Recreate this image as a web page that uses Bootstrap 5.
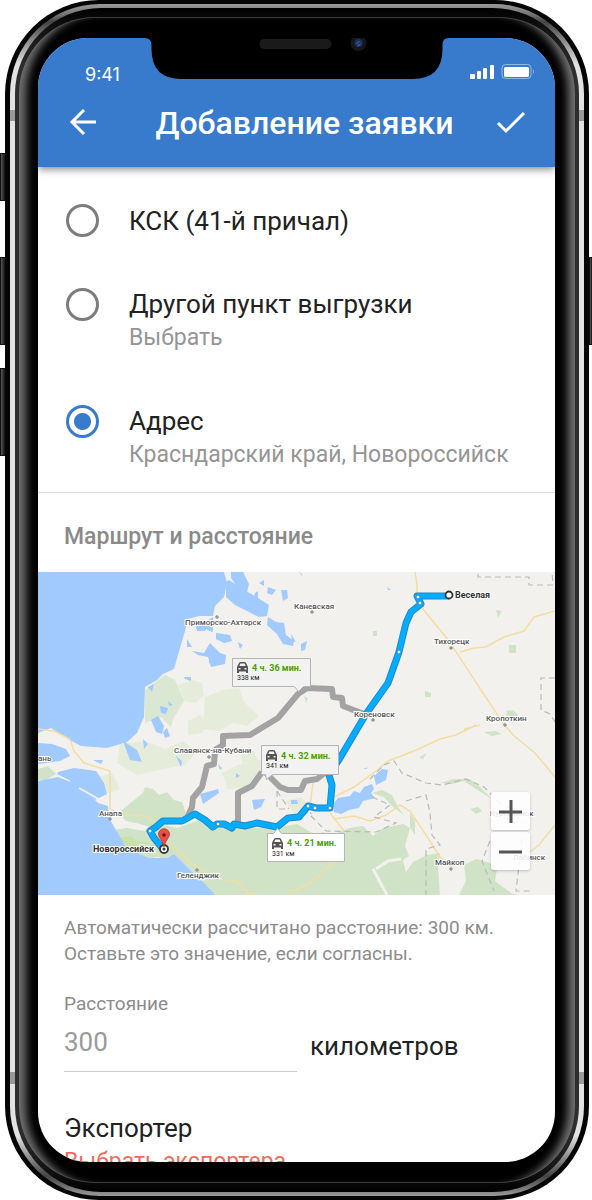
<!DOCTYPE html>
<html lang="ru">
<head>
<meta charset="utf-8">
<meta name="viewport" content="width=device-width, initial-scale=1">
<title>Добавление заявки</title>
<link href="https://cdn.jsdelivr.net/npm/bootstrap@5.3.0/dist/css/bootstrap.min.css" rel="stylesheet">
<style>
  body { font-family: Roboto, "Open Sans", sans-serif; background: #fff; color: #222; }
  .phone { display: grid; grid-template-columns: 5px minmax(0, 1fr) 3px; height: 100vh; overflow: hidden; }
  .keys { display: flex; flex-direction: column; }
  .key { background: linear-gradient(to right, #555, #111); border: 1px solid #111; border-right: 0; flex: none; }
  .keys-left { padding-top: 153px; }
  .keys-right { padding-top: 257px; }
  .key-mute { height: 48px; margin-bottom: 56px; }
  .key-long { height: 88px; margin-bottom: 23px; }

  /* nested shells of the case, from the outer edge in */
  .shell-edge { background: #050505; border-radius: 94px; padding: 4px 5px; min-height: 0; }
  .shell-ring { height: 100%; border-radius: 90px; padding: 4px 5px;
    background: linear-gradient(to bottom, #999 0, #777 10px, #444 18px, #e2e2e2 60px, #e2e2e2 106px, #999 106px, #999 117px, #e2e2e2 117px, #e2e2e2 calc(100% - 124px), #999 calc(100% - 124px), #999 calc(100% - 112px), #e2e2e2 calc(100% - 112px), #e2e2e2 calc(100% - 60px), #444 calc(100% - 20px), #999 100%); }
  .shell-lip { height: 100%; border-radius: 86px; padding: 9px 4px; background: linear-gradient(to bottom, #000 0, #111 20px, #2e2e2e 60px, #2e2e2e calc(100% - 60px), #111 calc(100% - 20px), #000); }
  .shell-bezel { height: 100%; border-radius: 76px; padding: 21px 20px 21px 19px; background: #000;
    box-shadow: inset 13px 0 9px -6px #707070, inset -13px 0 9px -6px #707070, inset 0 1px 0 #333, inset 0 -1px 0 #333; }
  .viewport { height: 100%; border-radius: 50px; overflow: hidden; background: #fff; position: relative; display: flex; flex-direction: column; }
  .notch { position: absolute; top: 0; left: 50%; transform: translateX(-50%); z-index: 3; }

  .app-head { background: #387bcd; color: #fff; box-shadow: 0 2px 8px rgba(0,0,0,.5); z-index: 2; flex: none; height: 129px; }
  .status { height: 60px; padding: 25px 20px 0 47px; }
  .clock { font: 400 18px/24px Inter, Roboto, sans-serif; }
  .head-row { padding: 0 29px 0 31px; height: 50px; }
  .head-row h1 { font-size: 32px; line-height: 36px; font-weight: 500; margin: 0; }
  .icon-btn { background: none; border: 0; padding: 0; color: #fff; line-height: 0; }

  .sheet { flex: 1 1 0; min-height: 0; overflow: hidden; }
  .pick { padding: 0 28px; gap: 30px; }
  .pick-first { padding-top: 37px; }
  .pick-next { padding-top: 51px; }
  .pick-last { padding-top: 49px; padding-bottom: 19px; border-bottom: 1px solid #dcdcdc; }
  .pick .form-check-input { width: 33px; height: 33px; margin: 0; border: 3px solid #7c7c7c; background: #fff; flex: none; float: none; }
  .pick .form-check-input:checked { border-color: #387bcd; background: radial-gradient(circle, #387bcd 0 8px, #fff 9px); }
  .fs-main { font-size: 26px; line-height: 32px; }
  .fs-sub { font-size: 23px; line-height: 36px; color: #959595; }
  .fs-note { font-size: 19px; line-height: 26px; color: #8c8c8c; }
  .section-title { font-size: 23px; line-height: 26px; font-weight: 500; color: #8a8a8a; margin: 0; padding: 31px 26px 22px; }
  .map-box { position: relative; }
  .map-box > svg { display: block; width: 100%; height: auto; }
  .zoomer { position: absolute; right: 25px; bottom: 25px; gap: 2px; }
  .zoomer button { width: 39px; height: 38px; padding: 0; border: 0; border-radius: 3px; background: rgba(255,255,255,.86); box-shadow: 0 1px 3px rgba(0,0,0,.22); display: grid; place-items: center; }
  .zoomer svg { width: 23px; height: 23px; }
  .town { font: 500 8px Roboto, sans-serif; fill: #555; stroke: #fff; stroke-width: 2; paint-order: stroke; }
  .town-end { font: 700 9px Roboto, sans-serif; fill: #333; stroke: #fff; stroke-width: 2; paint-order: stroke; }
  .eta { font: 700 9px Roboto, sans-serif; fill: #4c9f00; }
  .dist { font: 400 7px Roboto, sans-serif; fill: #222; }
  .pad { padding: 0 26px; }
  .km { width: 233px; border: 0; border-bottom: 1px solid #ccc; border-radius: 0; padding: 0 0 12px; font-size: 26px; line-height: 34px; color: #9a9a9a; background: none; }
  .unit { padding: 0 0 6px 13px; }
  .exporter { padding-top: 40px; }
  .pick-exp { display: block; color: #f5695d; font-size: 23px; line-height: 36px; text-decoration: none; }
</style>
</head>
<body>
<div class="phone">
  <div class="keys keys-left"><div class="key key-mute"></div><div class="key key-long"></div><div class="key key-long"></div></div>
  <div class="shell-edge"><div class="shell-ring"><div class="shell-lip"><div class="shell-bezel">
    <div class="viewport">
      <svg class="notch" width="305" height="41" viewBox="144 38 305 41" aria-hidden="true">
        <path d="M144 37v1q7 0 7 7v4q0 30 30 30h231q30 0 30-30v-4q0-7 6-7v-1z" fill="#000"/>
        <rect x="259" y="39" width="72" height="10" rx="5" fill="#1a1a1a"/>
        <circle cx="358" cy="43" r="8" fill="#17171a"/><circle cx="358" cy="43" r="4" fill="#1c3263"/><path d="M356 44l3-3M357 46l3-2" stroke="#4870bd" stroke-width="1"/>
      </svg>
      <header class="app-head">
        <div class="status d-flex justify-content-between align-items-start">
          <span class="clock">9:41</span>
          <svg width="65" height="16" viewBox="0 0 65 16" aria-hidden="true" fill="#fff">
            <rect x="0" y="11" width="5" height="5" rx="1"/><rect x="7" y="8" width="4" height="8" rx="1"/><rect x="13" y="5" width="4" height="11" rx="1"/><rect x="20" y="2" width="4" height="14" rx="1"/>
            <rect x="32" y="1.500" width="29" height="14" rx="3.500" fill="none" stroke="#8fb8ea"/><rect x="34" y="4" width="25" height="10" rx="1.500"/><path d="M63 6q2 3 0 5z" fill="#8fb8ea"/>
          </svg>
        </div>
        <div class="head-row d-flex align-items-center justify-content-between">
          <button class="icon-btn" type="button" aria-label="Назад"><svg width="28" height="28" viewBox="0 0 28 28" fill="none" stroke="#fff" stroke-width="3"><path d="M27 13H4M15 1 3 13l12 12"/></svg></button>
          <h1 class="ps-3">Добавление заявки</h1>
          <button class="icon-btn" type="button" aria-label="Готово"><svg width="30" height="28" viewBox="0 0 30 28" fill="none" stroke="#fff" stroke-width="3"><path d="M2 14l8 8L28 4"/></svg></button>
        </div>
      </header>
      <main class="sheet">
        <div class="pick pick-first d-flex align-items-center">
          <input class="form-check-input" type="radio" name="place" id="p1">
          <label class="fs-main" for="p1">КСК (41-й причал)</label>
        </div>
        <div class="pick pick-next d-flex align-items-start">
          <input class="form-check-input" type="radio" name="place" id="p2">
          <label for="p2"><span class="fs-main d-block">Другой пункт выгрузки</span><span class="fs-sub d-block">Выбрать</span></label>
        </div>
        <div class="pick pick-last d-flex align-items-start">
          <input class="form-check-input" type="radio" name="place" id="p3" checked>
          <label for="p3"><span class="fs-main d-block">Адрес</span><span class="fs-sub d-block">Красндарский край, Новороссийск</span></label>
        </div>
        <h2 class="section-title">Маршрут и расстояние</h2>
        <div class="map-box">
          <svg viewBox="38 571 517 323" role="img" aria-label="Карта маршрута">
            <rect x="38" y="571" width="517" height="323" fill="#f2f1ed"/>
            <!-- fields -->
            <g fill="#e6ecda">
              <path d="M178 684l14-5 10 3 2 12-8 8-12-2zM205 696l18-7 16-2 5 14 15 14-12 10-14-3-14 8-17-2 2-16zM188 720l12-6 8 8-6 10-14 2zM120 743l25-3 20 8 18-8 14 10-12 14-22 4-26 6-20-12zM222 772l16-8 26-6 4 14-20 14-20 2zM90 778l22-6 8 16-12 4zM240 748l14 2 4 10-16 2zM285 800l16-4 8 10-14 8z"/>
            </g>
            <path d="M145 689l20-15 10 5 9 21-11 18-2 8-10-10-16 6z" fill="#dae7d3"/>
            <!-- forest -->
            <g fill="#d1e3c7">
              <path d="M118 812l15-12 10-8 2-6 8 2 6 6 8-3 7 8 8 2 4 12-6 7-14 4-16 2-14-4-10-2z"/>
              <path d="M113 829l14-2 18 3 12-7 20 4 22-8 16 5 30 3 30 0 22-4 20 12 6-4 6 4 20-8 14-2 10 10 10-8 20-4 7 4-5 18 4 10-6 4 3 12 7-10 14-7 13-2-2 12 2 32h18l8-16-2-16 12-6 14 4 7 6-2 12 16 12 13 4v6H214l-22-22-16-18-18-6-12 2-24-9z"/>
              <path d="M38 768l10-3 8 8-10 6h-8zM372 792l10-3 10 5 6 12 6 8-11-8-9-10zM410 812l5 8v14l-5-8zM440 782l14-4 16 0 10 8 12 12-16-10-12-8-12 3zM484 731l12-1 6 3-10 2zM419 756l8-4-4 6zM470 808l8-2 4 4-6 3zM505 713l8-4 4 4 4 8-8-4zM373 630l4 0 0 5-4 0zM496 609l6 1-4 7zM509 644h7v8h-7zM425 690l6 2v4h-6zM304 695l4 2-2 5zM506 710l5-1v8z"/>
            </g>
            <path d="M376 868l12-8 13-2M373 868l14 26" stroke="#f2f1ed" stroke-width="3" fill="none"/>
            <path d="M119 837l12-2 6 5 12 2-8 4-14 0z" fill="#c7e2a7"/>
            <!-- water -->
            <g fill="#a1caff">
              <path d="M38 571H224l3 11-3 14-9 9-2 10-14 0-11 3-3 12-5 17-6 21-11 5-6 6-12 7-1 30-7 16-10 9-20 6-26-2-13-7-17-11-11 4-4 4z"/>
              <path d="M38 742l14 1 14 5 4 7-10 5-22 3zM58 771l16-4 22 3 8 12 3 11-12 6-8-8-10-4-8-8-12-6z"/>
              <path d="M38 780l20-4 10 4 6 2 14 10 10 10 10 3 1 12 7 12 11 19 22 9 18 0 7-4 8 8 11 11 12 11 11 12H38z"/>
              <path d="M226 581l3-2 12 8 17 10 11 7-2 11-8 1-12-6-12-6-9-8zM231 571h12l6 12-2 8-9-4-7-10zM268 616l8 5 8 1 2 12 8 6-1 5-10-2-6-10-10-9zM195 623l14 1-4 6-8 0zM204 622l9-6v15l-6-2zM216 632l14 2 2 6-8 2-8-4zM187 638l5 8-5 0zM192 650l12 2 6-10 10 10 6 2-1 9-14 3-3-10-10-2zM209 651l4 0v13l-4-2zM238 641l5 3-3 4zM255 592l3-2v7l-4 0zM259 582l5-3 0 6zM268 586l8 3-4 5-5-2zM281 589l6 0 1 8-5 3zM291 633l5 8-4-1zM301 643l6-3-2 9-4 1zM184 676l7 0 0 4-6-2zM148 686l6-3-2 8zM160 705l8 2-2 6-5-1zM168 700l5 4-4 1zM151 719l7-4 6 10-2 8-6-2zM163 731l4-4 3 8-5 2zM143 738l5 5-4 5zM123 740l14 9 5 12-12-2zM93 759l10 0-2 4zM176 755l6 5-1 6zM200 793l18-5 1 4-16 11zM252 799l13-1-4 8-7 3zM218 763l4 4-2 2zM236 772l4 3-4 2zM291 799h6l1 4-7 0zM387 586l4 3h-3zM299 571l3 2v2z"/>
              <path d="M334 802l4-5 12-2 4-5 6 2 4-6 8-3 2 5-3 4 4 5-12 3-4 7-10 2-8 4-7-2zM374 775l8-7 6 1-2 10-10 5zM363 768l6-2-3 2zM310 811l3 2h-3z"/>
            </g>
            <path d="M79 787l16 9 13 8" stroke="#f2f1ed" stroke-width="2" fill="none"/>
            <!-- roads -->
            <g fill="none" stroke="#f2dda3" stroke-width="1.500">
              <path d="M38 728l16 2 16 8 4 12 10 12 26 8v38l12 6 26 1 8 11M168 842l24 20 24 16 20 2 12 12 10 2M415 571l2 13v10l6 14 26 32 38 58 16 24 10 12 22 18 20 24M460 651l14-4 12-1 18-10 20-6 10-14 21-6M334 796l20-10 22-16 12-10 26-10 26-12 16-4 20-10M480 724l-16 4M330 812l14 18M334 818l20-3 16 5 16-6 14-10 10 6 16 24 14 22 10 10M290 892l20-10 18-16 10-6M555 824l-16 20-18 14M313 782l-3 22"/>
            </g>
            <g fill="none" stroke="#b9b9b9" stroke-width="1.200" stroke-dasharray="6 4">
              <path d="M478 573v3h51v8h24l-1-13M555 677h-14v32l9 4 5 8M370 778l14-14 10-4 8 12 24 10 16 2 24-6 18 8 16 16 20 10M406 800l20-6 4 18 2 22 8 10-14 4v46M372 796l18 8-16 12 22 6-20 9-50-1-20-20M490 840l-8 20 12 30M277 790l12 18M277 790v18h12M522 838l-6 52h16"/>
            </g>
            <!-- alternative routes -->
            <g fill="none" stroke="#a3a3a3" stroke-width="6" stroke-linejoin="round">
              <path d="M364 713l-21-8-1-8-9-1-1-8-25-1-9 6-20 24-28 17-27 1v9l-8 5-1 14-7 2-5 21-9 11-1 9-5 11M238 824v-32l14-7 10-14M264 770l16 16 8 3 13 0 4-9 12-2 10-8"/>
            </g>
            <!-- main route, dark casing below the bright line -->
            <path d="M449 595h-32l4 8-10 8-5 11-7 29-11 31-22 31-26 44-11 17 3 10-2 23-14 0-8-2-9 11-11 1-11 9-20-4-12 3-11-2-2 4-8-4-7 0-4 3-8-7-10-6-13 7h-19l-7 6-6 4 4 7 9 11" fill="none" stroke="#2089cf" stroke-width="7" stroke-linejoin="round"/>
            <path d="M449 595h-32l4 8-10 8-5 11-7 29-11 31-22 31-26 44-11 17 3 10-2 23-14 0-8-2-9 11-11 1-11 9-20-4-12 3-11-2-2 4-8-4-7 0-4 3-8-7-10-6-13 7h-19l-7 6-6 4 4 7 9 11" fill="none" stroke="#05adff" stroke-width="5" stroke-linejoin="round"/>
            <g fill="#fff" stroke="#2089cf"><circle cx="418" cy="596" r="2"/><circle cx="420" cy="602" r="2"/><circle cx="399" cy="651" r="2"/><circle cx="330" cy="807" r="2"/><circle cx="315" cy="807" r="2"/><circle cx="308" cy="805" r="2"/><circle cx="218" cy="823" r="2"/><circle cx="150" cy="830" r="2"/></g>
            <circle cx="449" cy="594" r="3.500" fill="#fff" stroke="#333" stroke-width="1.800"/>
            <!-- towns -->
            <g fill="#ddd" stroke="#777"><circle cx="217" cy="616" r="1.200"/><circle cx="312" cy="611" r="1.200"/><circle cx="451" cy="647" r="1.200"/><circle cx="373" cy="719" r="1.200"/><circle cx="505" cy="724" r="1.200"/><circle cx="451" cy="868" r="1.200"/><circle cx="110" cy="818" r="1.200"/><circle cx="197" cy="869" r="1.200"/><circle cx="209" cy="756" r="1.200"/></g>
            <text class="town" x="185" y="624">Приморско-Ахтарск</text>
            <text class="town" x="294" y="608">Каневская</text>
            <text class="town" x="434" y="643">Тихорецк</text>
            <text class="town" x="354" y="716">Кореновск</text>
            <text class="town" x="486" y="720">Кропоткин</text>
            <text class="town" x="174" y="752">Славянск-на-Кубани</text>
            <text class="town" x="99" y="815">Анапа</text>
            <text class="town" x="177" y="877">Геленджик</text>
            <text class="town" x="435" y="864">Майкоп</text>
            <text class="town" x="490" y="815">Курганинск</text>
            <text class="town" x="513" y="859">Лабинск</text>
            <text class="town" x="38" y="760">ань</text>
            <text class="town-end" x="455" y="597">Веселая</text>
            <text class="town-end" x="93" y="851">Новороссийск</text>
            <!-- destination pin -->
            <circle cx="164" cy="848" r="4" fill="#fff" stroke="#333" stroke-width="1.800"/><circle cx="164" cy="848" r="1.500" fill="#333"/>
            <path d="M164 846q-1-5-4-9a5.500 5.500 0 1 1 8 0q-3 4-4 9z" fill="#ea4f43" stroke="#b8372e" stroke-width=".8"/><circle cx="164" cy="834" r="1.800" fill="#5e1712"/>
            <!-- travel time tags -->
            <defs>
              <path id="car" d="M1 5l2-4q.5-1 1.500-1h4q1 0 1.500 1l2 4v6h-2V9.500H3V11H1zM3.300 4h6.400l-1-2.400H4.300zM2.500 6v1.600h2V6zm6 0v1.600h2V6z" fill="#555" fill-rule="evenodd"/>
            </defs>
            <g stroke="#b4b4b4">
              <path d="M232.500 657.500h78v28h-7l-5 5-4-5h-62z" fill="#f2f2f2"/>
              <path d="M261.500 744.500h77v29h-66l-6 5-1-5h-4z" fill="#f2f2f2"/>
              <path d="M267.500 832.500h6l4-5 4 5h63v28h-77z" fill="#fff"/>
            </g>
            <use href="#car" x="236" y="661"/><use href="#car" x="265" y="749"/><use href="#car" x="271" y="837"/>
            <text class="eta" x="252" y="670">4 ч. 36 мин.</text><text class="dist" x="237" y="679">338 км</text>
            <text class="eta" x="281" y="758">4 ч. 32 мин.</text><text class="dist" x="266" y="767">341 км</text>
            <text class="eta" x="287" y="845">4 ч. 21 мин.</text><text class="dist" x="272" y="855">331 км</text>
          </svg>
          <div class="zoomer d-flex flex-column">
            <button type="button" aria-label="Приблизить"><svg viewBox="0 0 23 23" stroke="#555" stroke-width="3"><path d="M0 12h23M12 0v23"/></svg></button>
            <button type="button" aria-label="Отдалить"><svg viewBox="0 0 23 23" stroke="#555" stroke-width="3"><path d="M0 12h23"/></svg></button>
          </div>
        </div>
        <p class="fs-note pad mt-3 pt-1 mb-4">Автоматически рассчитано расстояние: 300 км.<br>Оставьте это значение, если согласны.</p>
        <div class="pad">
          <label class="fs-note d-block mb-2" for="km">Расстояние</label>
          <div class="d-flex align-items-center">
            <input class="km" id="km" type="text" value="300">
            <span class="fs-main unit">километров</span>
          </div>
        </div>
        <div class="pad exporter">
          <div class="fs-main">Экспортер</div>
          <a class="pick-exp" href="#">Выбрать экспортера</a>
        </div>
      </main>
    </div>
  </div></div></div></div>
  <div class="keys keys-right"><div class="key key-long"></div></div>
</div>
<script src="https://cdn.jsdelivr.net/npm/bootstrap@5.3.0/dist/js/bootstrap.bundle.min.js"></script>
</body>
</html>
